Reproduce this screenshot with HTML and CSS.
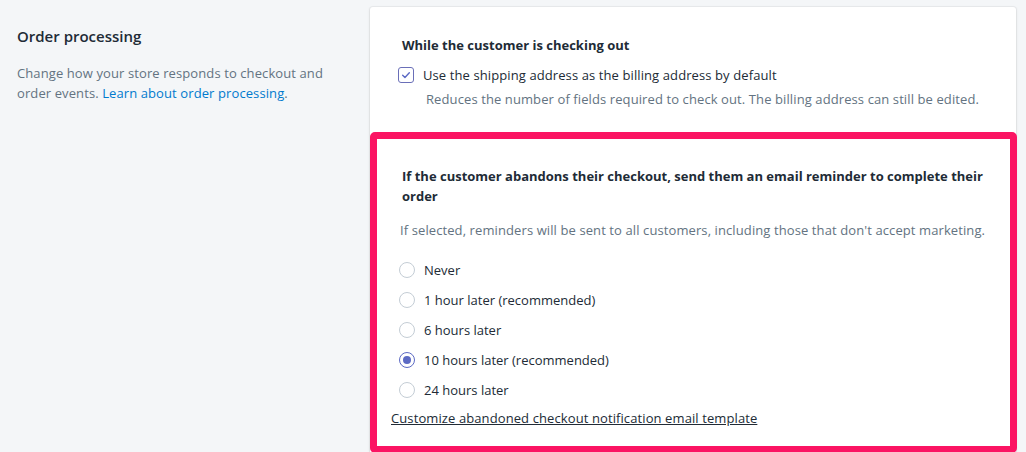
FILE: index.html
```html
<!DOCTYPE html>
<html lang="en">
<head>
    <meta charset="UTF-8">
    <title>Order processing</title>
    <link rel="stylesheet" href="styles.css">
</head>
<body>
    <div class="layout">
        <div class="annotation">
            <h2 class="annotation-title">Order processing</h2>
            <p class="annotation-text">Change how your store responds to checkout and order events. <a href="#" class="link">Learn about order processing</a>.</p>
        </div>
        <div class="card">
            <div class="section">
                <h3 class="section-title">While the customer is checking out</h3>
                <label class="check-row">
                    <span class="checkbox">
                        <svg viewBox="0 0 16 16" width="16" height="16"><path d="M4.2 8.3l2.6 2.6 5-5.4" fill="none" stroke="#5c6ac4" stroke-width="1.6" stroke-linecap="round" stroke-linejoin="round"/></svg>
                    </span>
                    <span>Use the shipping address as the billing address by default</span>
                </label>
                <p class="help help-check">Reduces the number of fields required to check out. The billing address can still be edited.</p>
            </div>
            <div class="section section-marked">
                <h3 class="section-title marked-title">If the customer abandons their checkout, send them an email reminder to complete their order</h3>
                <p class="help marked-help">If selected, reminders will be sent to all customers, including those that don't accept marketing.</p>
                <ul class="radio-list">
                    <li class="radio-row"><span class="radio"></span>Never</li>
                    <li class="radio-row"><span class="radio"></span>1 hour later (recommended)</li>
                    <li class="radio-row"><span class="radio"></span>6 hours later</li>
                    <li class="radio-row"><span class="radio checked"></span>10 hours later (recommended)</li>
                    <li class="radio-row"><span class="radio"></span>24 hours later</li>
                </ul>
                <a href="#" class="template-link">Customize abandoned checkout notification email template</a>
            </div>
        </div>
    </div>
</body>
</html>
```

FILE: styles.css
```css
body {
    margin: 0;
    background: #f4f6f8;
    font-family: "Open Sans", "Noto Sans", sans-serif;
    font-size: 13px;
    line-height: 20px;
    color: #212b36;
}
.layout {
    display: flex;
    padding: 7px 10px 0 17px;
    height: 445px;
    overflow: hidden;
}
.annotation {
    flex: 0 0 312px;
    margin-right: 41px;
    padding-top: 19px;
}
.annotation-title {
    margin: 0;
    font-size: 15px;
    font-weight: 600;
    line-height: 20px;
}
.annotation-text {
    margin: 17px 0 0;
    color: #637381;
    letter-spacing: 0.1px;
}
.link {
    color: #007ace;
    text-decoration: none;
}
.card {
    flex: 1;
    background: #fff;
    box-shadow: 0 0 0 1px rgba(63, 63, 68, 0.05), 0 1px 3px rgba(63, 63, 68, 0.15);
    border-radius: 3px 3px 0 0;
}
.section {
    padding: 28px 20px 23px 32px;
}
.section-title {
    margin: 0;
    font-size: 13px;
    font-weight: 700;
    line-height: 20px;
}
.check-row {
    display: flex;
    align-items: center;
    margin: 10px 0 0 -4px;
    letter-spacing: 0.1px;
}
.checkbox {
    width: 14px;
    height: 14px;
    border: 1.5px solid #6a6fb8;
    border-radius: 3px;
    margin-right: 9px;
    display: flex;
    align-items: center;
    justify-content: center;
}
.checkbox svg {
    width: 14px;
    height: 14px;
}
.help {
    margin: 0;
    color: #637381;
    letter-spacing: 0.1px;
}
.help-check {
    margin: 4px 0 0 24px;
}
.section-marked {
    border: 7px solid #fb1463;
    border-radius: 5px;
    padding: 27px 8px 18px 14px;
    margin-right: -1px;
}
.marked-title {
    padding-left: 11px;
}
.marked-help {
    margin-top: 14px;
    padding-left: 9px;
}
.radio-list {
    list-style: none;
    margin: 20px 0 0;
    padding: 0 0 0 8px;
}
.radio-row {
    display: flex;
    align-items: center;
    height: 20px;
    margin-bottom: 10px;
}
.radio-row:last-child {
    margin-bottom: 8px;
}
.radio {
    box-sizing: border-box;
    width: 16px;
    height: 16px;
    border: 1px solid #c4cdd5;
    border-radius: 50%;
    margin-right: 9px;
    display: flex;
    align-items: center;
    justify-content: center;
}
.radio.checked {
    border: 1.5px solid #5c6ac4;
}
.radio.checked::after {
    content: "";
    width: 8px;
    height: 8px;
    border-radius: 50%;
    background: #5c6ac4;
}
.template-link {
    color: #212b36;
    text-decoration: underline;
    letter-spacing: 0.1px;
}
```
